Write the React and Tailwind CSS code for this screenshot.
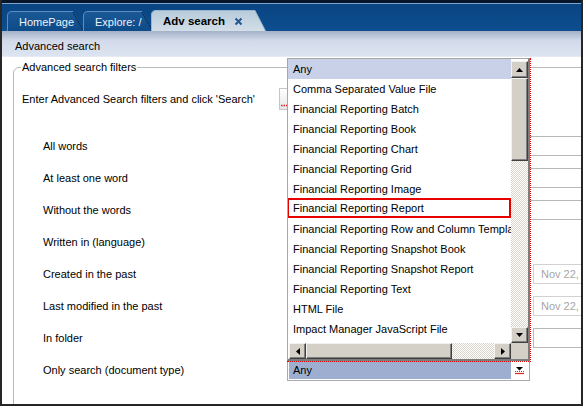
import React from "react"

const items = [
  "Any",
  "Comma Separated Value File",
  "Financial Reporting Batch",
  "Financial Reporting Book",
  "Financial Reporting Chart",
  "Financial Reporting Grid",
  "Financial Reporting Image",
  "Financial Reporting Report",
  "Financial Reporting Row and Column Template",
  "Financial Reporting Snapshot Book",
  "Financial Reporting Snapshot Report",
  "Financial Reporting Text",
  "HTML File",
  "Impact Manager JavaScript File",
]

const btn =
  "flex items-center justify-center bg-[#d4d0c8] border border-t-[#f4f2ee] border-l-[#f4f2ee] border-r-[#404040] border-b-[#404040] shadow-[inset_-1px_-1px_0_#808080]"
const track =
  "bg-[repeating-conic-gradient(#d8d4cc_0%_25%,#ffffff_0%_50%)] bg-[length:2px_2px]"

function Tab({ width, height, label, active, fillId }) {
  return (
    <div className="relative shrink-0" style={{ width, height }}>
      <svg className="absolute inset-0" width={width} height={height}>
        <defs>
          <linearGradient id={fillId} x1="0" y1="0" x2="0" y2="1">
            <stop offset="0" stopColor={active ? "#b7cbda" : "#1a5896"} />
            <stop offset="1" stopColor={active ? "#d2dee8" : "#0d4a88"} />
          </linearGradient>
        </defs>
        <path
          d={`M0.5 ${height} V5 Q0.5 0.5 5 0.5 H${width - 11} L${width - 0.5} ${height}`}
          fill={`url(#${fillId})`}
          stroke={active ? "#9ab6cc" : "#5c8ec2"}
        />
        {!active && (
          <path d={`M${width - 11} 1 L${width - 0.5} ${height}`} stroke="#062f5c" strokeWidth="1.2" />
        )}
      </svg>
      <div
        className={`relative flex h-full items-center pl-[12px] pt-[3px] ${
          active ? "font-bold text-black text-[11.5px]" : "text-[#eef3f9] text-[11px]"
        }`}
      >
        {label}
      </div>
    </div>
  )
}

function Box({ className = "", children }) {
  return (
    <div className={`h-[20px] border border-[#b8b8b8] bg-white shrink-0 ${className}`}>{children}</div>
  )
}

export default function App() {
  return (
    <div className="relative w-[583px] h-[406px] overflow-hidden bg-white border-l-2 border-r-2 border-b-2 border-[#262626] font-['Liberation_Sans',Arial,sans-serif] text-[11px] text-black">
      {/* top tab band */}
      <div className="h-[31px] flex flex-col">
        <div className="h-[3px] bg-[#06152a]" />
        <div className="h-[1px] bg-[#7ba3cb]" />
        <div className="flex-1 flex items-end pl-[5px] bg-gradient-to-b from-[#0a4483] to-[#0d4e8f]">
          <Tab width={77} height={20} label="HomePage" fillId="t1" />
          <div className="-ml-[1px]">
            <Tab width={70} height={20} label="Explore: /" fillId="t2" />
          </div>
          <div className="-ml-[2px] relative">
            <Tab width={115} height={21} label="Adv search" active fillId="t3" />
            <svg className="absolute left-[83px] top-[7px]" width="9" height="9" viewBox="0 0 9 9">
              <path d="M1.5 1.5 L7.5 7.5 M7.5 1.5 L1.5 7.5" stroke="#24578f" strokeWidth="2" />
            </svg>
          </div>
        </div>
      </div>

      {/* sub header bar */}
      <div className="h-[26px] bg-gradient-to-b from-[#a4b1c6] via-[#d3dbeb] via-40% to-[#dce3f1] border-b border-[#e6eaf3] pl-[13px] pt-[9px] leading-[13px]">
        Advanced search
      </div>

      {/* body */}
      <div className="h-[347px] overflow-hidden pl-[11px] pt-[4px]">
        <fieldset className="w-[700px] h-[400px] border border-[#b9b9b9] rounded-tl-[6px]">
          <legend className="ml-[7px] px-[1px] leading-[13px]">Advanced search filters</legend>
          <div className="pl-[8px] pt-[14px]">
            <div className="flex items-center h-[22px]">
              <div className="w-[257px]">Enter Advanced Search filters and click 'Search'</div>
              <div className="relative w-[30px] h-[22px] border border-[#c6c6c6] bg-gradient-to-b from-white to-[#e6e6e6]">
                <svg className="absolute left-[1px] bottom-[2px]" width="8" height="3">
                  <path d="M0 1.5 H8" stroke="#e02020" strokeWidth="1.5" strokeDasharray="1.5 1" />
                </svg>
              </div>
            </div>

            <div className="mt-[20px] flex flex-col">
              <Row label="All words">
                <Box className="w-[330px]" />
              </Row>
              <Row label="At least one word">
                <Box className="w-[330px]" />
              </Row>
              <Row label="Without the words">
                <Box className="w-[330px]" />
              </Row>
              <Row label="Written in (language)">
                <Box className="w-[200px]" />
              </Row>
              <Row label="Created in the past">
                <Box className="w-[110px]" />
                <div className="w-[136px]" />
                <DateBox />
              </Row>
              <Row label="Last modified in the past">
                <Box className="w-[110px]" />
                <div className="w-[136px]" />
                <DateBox />
              </Row>
              <Row label="In folder">
                <Box className="w-[236px]" />
                <div className="w-[10px]" />
                <Box className="w-[120px]" />
              </Row>
              <Row label="Only search (document type)">
                <div className="w-[243px] h-[22px] border border-[#aaaaaa] bg-white p-[1px] flex">
                  <div className="flex-1 bg-[#9eaed0] pl-[4px] flex items-center">Any</div>
                  <div className="w-[17px] flex items-center justify-center">
                    <svg width="11" height="10" viewBox="0 0 11 10">
                      <path d="M2 2 H9 L5.5 5.5 Z" fill="#000" />
                      <path d="M1 6.5 H10" stroke="#e02020" strokeDasharray="1 1" />
                      <path d="M1 8.5 H10" stroke="#e02020" strokeWidth="1.2" />
                    </svg>
                  </div>
                </div>
              </Row>
            </div>
          </div>
        </fieldset>
      </div>

      {/* open dropdown list */}
      <div className="absolute left-[285px] top-[58px] z-10 border-r border-b border-dotted border-[#e00000]">
        <div className="border-t border-l border-[#a8a8a8] border-r-2 border-b-2 border-r-[#7c7c7c] border-b-[#7c7c7c] bg-white">
          <div className="flex h-[284px]">
            <div className="w-[223px] overflow-hidden whitespace-nowrap">
              {items.map((it, i) => (
                <div
                  key={it}
                  className={`h-[20px] flex items-center ${
                    i === 0 ? "bg-[#c8d1e7] pl-[5px]" : ""
                  } ${
                    i === 7
                      ? "border-2 border-[#e60000] -ml-[1px] -mt-[1px] pl-[4px] mb-[1px]"
                      : i !== 0
                      ? "pl-[5px]"
                      : ""
                  }`}
                >
                  {it}
                </div>
              ))}
            </div>
            <div className="w-[17px] flex flex-col">
              <div className={`${btn} h-[17px] mt-[2px]`}>
                <svg width="7" height="4" viewBox="0 0 7 4">
                  <path d="M3.5 0 L7 4 H0 Z" fill="#000" />
                </svg>
              </div>
              <div className={`${btn} h-[83px]`} />
              <div className={`flex-1 ${track}`} />
              <div className={`${btn} h-[16px]`}>
                <svg width="7" height="4" viewBox="0 0 7 4">
                  <path d="M0 0 H7 L3.5 4 Z" fill="#000" />
                </svg>
              </div>
            </div>
          </div>
          <div className="flex h-[16px]">
            <div className={`${btn} w-[17px] ml-[1px]`}>
              <svg width="4" height="7" viewBox="0 0 4 7">
                <path d="M4 0 V7 L0 3.5 Z" fill="#000" />
              </svg>
            </div>
            <div className={`${btn} w-[146px]`} />
            <div className={`flex-1 ${track}`} />
            <div className={`${btn} w-[17px]`}>
              <svg width="4" height="7" viewBox="0 0 4 7">
                <path d="M0 0 V7 L4 3.5 Z" fill="#000" />
              </svg>
            </div>
            <div className="w-[17px] bg-[#d4d0c8]" />
          </div>
        </div>
      </div>
    </div>
  )
}

function Row({ label, children }) {
  return (
    <div className="flex items-center h-[32px]">
      <div className="w-[265px] pl-[21px] shrink-0">{label}</div>
      <div className="flex items-center">{children}</div>
    </div>
  )
}

function DateBox() {
  return (
    <div className="h-[20px] w-[120px] border border-[#d2d2d2] bg-white pl-[7px] flex items-center text-[#a6a6a6] shrink-0">
      Nov 22,
    </div>
  )
}
